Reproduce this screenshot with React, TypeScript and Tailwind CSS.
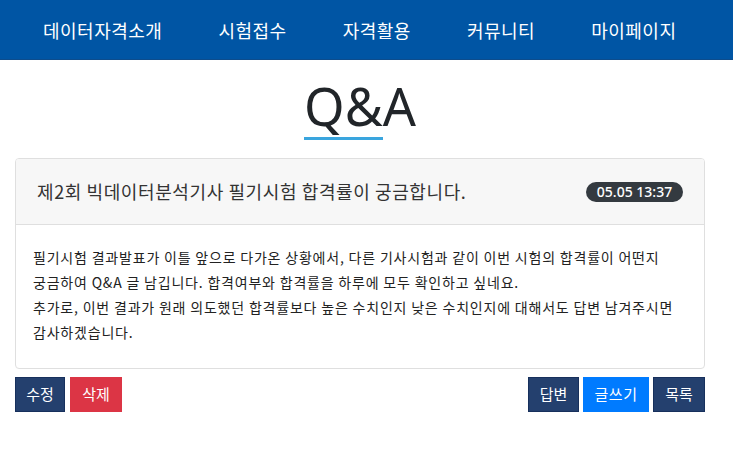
import React from "react";

const KR = { fontFamily: '"Noto Sans CJK KR", "Noto Sans", sans-serif' };

export default function App() {
  const navItems = ["데이터자격소개", "시험접수", "자격활용", "커뮤니티", "마이페이지"];
  return (
    <div className="w-[733px] min-h-[466px] bg-white text-[#212529]" style={KR}>
      <nav className="h-[60px] bg-[#0055a4] border-b border-[#0d4c8c] flex items-center pl-[15px]">
        {navItems.map((t) => (
          <div key={t} className="px-[28px] text-[18px] tracking-[0.5px] leading-none text-white">
            {t}
          </div>
        ))}
      </nav>

      <div className="w-[720px] flex justify-center pt-[16px]">
        <div className="flex flex-col items-start">
          <h1
            className="text-[52px] leading-[60px] text-[#212529]"
            style={{ fontFamily: '"Noto Sans", "Open Sans", sans-serif' }}
          >
            Q&amp;A
          </h1>
          <div className="mt-[1px] h-[3px] w-[79px] bg-[#3aa5de]" />
        </div>
      </div>

      <div className="ml-[15px] w-[690px] mt-[18px] border border-[#dfdfdf] rounded-[4px] overflow-hidden">
        <div className="h-[66px] bg-[#f7f7f7] border-b border-[#dfdfdf] flex items-center justify-between pl-[21px] pr-[21px]">
          <div className="text-[18px] tracking-[0.6px] text-[#333]">
            제2회 빅데이터분석기사 필기시험 합격률이 궁금합니다.
          </div>
          <div
            className="h-[20px] w-[97px] justify-center rounded-full bg-[#343a40] text-white text-[14px] font-medium flex items-center leading-none"
            style={{ fontFamily: '"Noto Sans", sans-serif' }}
          >
            05.05 13:37
          </div>
        </div>
        <div className="pl-[17px] pt-[20px] pb-[23px] text-[14px] tracking-[0.8px] leading-[25px] text-[#222]">
          <div className="whitespace-nowrap">
            필기시험 결과발표가 이틀 앞으로 다가온 상황에서, 다른 기사시험과 같이 이번 시험의 합격률이 어떤지
          </div>
          <div className="whitespace-nowrap">
            궁금하여 Q&amp;A 글 남깁니다. 합격여부와 합격률을 하루에 모두 확인하고 싶네요.
          </div>
          <div className="whitespace-nowrap">
            추가로, 이번 결과가 원래 의도했던 합격률보다 높은 수치인지 낮은 수치인지에 대해서도 답변 남겨주시면
          </div>
          <div className="whitespace-nowrap">감사하겠습니다.</div>
        </div>
      </div>

      <div className="ml-[15px] w-[690px] mt-[8px] flex justify-between">
        <div className="flex gap-[5px]">
          <button className="h-[35px] w-[50px] text-[15px] text-white bg-[#24406e] border border-[#17305c]">
            수정
          </button>
          <button className="h-[35px] w-[52px] text-[15px] text-white bg-[#dc3545] border border-[#dc3545]">
            삭제
          </button>
        </div>
        <div className="flex gap-[4px]">
          <button className="h-[35px] w-[51px] text-[15px] text-white bg-[#24406e] border border-[#17305c]">
            답변
          </button>
          <button className="h-[35px] w-[66px] text-[15px] tracking-[0.5px] text-white bg-[#007bff] border border-[#007bff]">
            글쓰기
          </button>
          <button className="h-[35px] w-[52px] text-[15px] text-white bg-[#24406e] border border-[#17305c]">
            목록
          </button>
        </div>
      </div>
    </div>
  );
}
